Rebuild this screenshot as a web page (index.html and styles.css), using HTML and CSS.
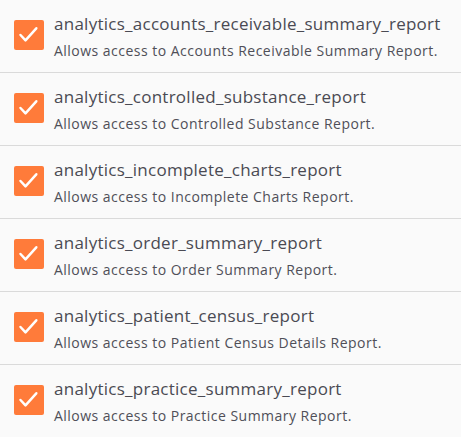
FILE: index.html
```html
<!DOCTYPE html>
<html>
<head>
<meta charset="utf-8">
<link rel="stylesheet" href="styles.css">
</head>
<body>
<ul class="list">
  <li class="row">
    <span class="check"><svg viewBox="0 0 30 30" width="30" height="30"><path d="M6.5 15 L11.5 20.3 L22.3 8.3" fill="none" stroke="#fff" stroke-width="2.5" stroke-linecap="round" stroke-linejoin="round"/></svg></span>
    <div class="text"><div class="title">analytics_accounts_receivable_summary_report</div><div class="desc">Allows access to Accounts Receivable Summary Report.</div></div>
  </li>
  <li class="row">
    <span class="check"><svg viewBox="0 0 30 30" width="30" height="30"><path d="M6.5 15 L11.5 20.3 L22.3 8.3" fill="none" stroke="#fff" stroke-width="2.5" stroke-linecap="round" stroke-linejoin="round"/></svg></span>
    <div class="text"><div class="title">analytics_controlled_substance_report</div><div class="desc">Allows access to Controlled Substance Report.</div></div>
  </li>
  <li class="row">
    <span class="check"><svg viewBox="0 0 30 30" width="30" height="30"><path d="M6.5 15 L11.5 20.3 L22.3 8.3" fill="none" stroke="#fff" stroke-width="2.5" stroke-linecap="round" stroke-linejoin="round"/></svg></span>
    <div class="text"><div class="title">analytics_incomplete_charts_report</div><div class="desc">Allows access to Incomplete Charts Report.</div></div>
  </li>
  <li class="row">
    <span class="check"><svg viewBox="0 0 30 30" width="30" height="30"><path d="M6.5 15 L11.5 20.3 L22.3 8.3" fill="none" stroke="#fff" stroke-width="2.5" stroke-linecap="round" stroke-linejoin="round"/></svg></span>
    <div class="text"><div class="title">analytics_order_summary_report</div><div class="desc">Allows access to Order Summary Report.</div></div>
  </li>
  <li class="row">
    <span class="check"><svg viewBox="0 0 30 30" width="30" height="30"><path d="M6.5 15 L11.5 20.3 L22.3 8.3" fill="none" stroke="#fff" stroke-width="2.5" stroke-linecap="round" stroke-linejoin="round"/></svg></span>
    <div class="text"><div class="title">analytics_patient_census_report</div><div class="desc">Allows access to Patient Census Details Report.</div></div>
  </li>
  <li class="row">
    <span class="check"><svg viewBox="0 0 30 30" width="30" height="30"><path d="M6.5 15 L11.5 20.3 L22.3 8.3" fill="none" stroke="#fff" stroke-width="2.5" stroke-linecap="round" stroke-linejoin="round"/></svg></span>
    <div class="text"><div class="title">analytics_practice_summary_report</div><div class="desc">Allows access to Practice Summary Report.</div></div>
  </li>
</ul>
</body>
</html>
```
FILE: styles.css
```css
html, body {
  margin: 0;
  padding: 0;
  background: #fafafa;
  font-family: "Open Sans", sans-serif;
}
.list {
  list-style: none;
  margin: 0;
  padding: 0;
}
.row {
  display: flex;
  align-items: flex-start;
  height: 73px;
  box-sizing: border-box;
  padding: 12px 0 0 14px;
  border-bottom: 1px solid #dadada;
}
.check {
  flex: none;
  width: 30px;
  height: 30px;
  margin-top: 8px;
  margin-right: 10px;
  background: #ff7b3a;
  border-radius: 2px;
  display: flex;
}
.text {
  display: flex;
  flex-direction: column;
}
.title {
  font-size: 17px;
  line-height: 24px;
  letter-spacing: 0.26px;
  color: #4a4a53;
}
.desc {
  margin-top: 4px;
  font-size: 14px;
  line-height: 22px;
  letter-spacing: 0.48px;
  color: #4f4f58;
}
```
